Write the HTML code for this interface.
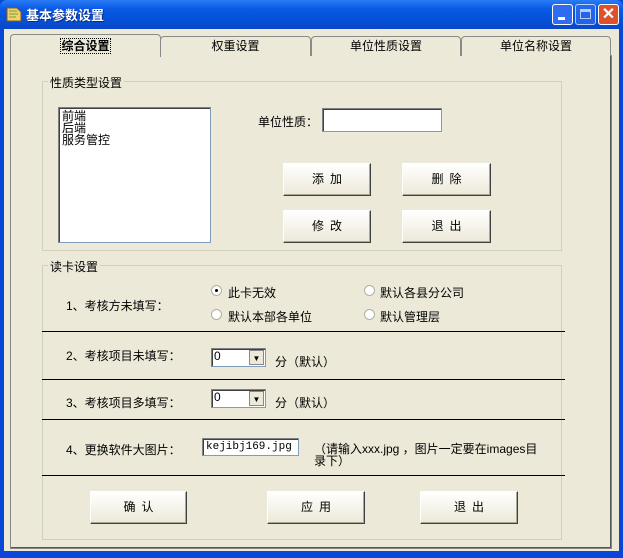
<!DOCTYPE html><html><head><meta charset="utf-8"><style>
*{margin:0;padding:0;box-sizing:border-box}
body{width:623px;height:558px;overflow:hidden;background:#0a46d8;font-family:"Liberation Sans","SimSun","Noto Sans CJK SC",sans-serif;font-size:12px;color:#000;position:relative}
.a{position:absolute}
#title{left:0;top:0;width:623px;height:29px;background:linear-gradient(#2a7cf5,#0a5ae6 30%,#0550d6 70%,#0a47c8);border-radius:7px 7px 0 0}
#client{left:4px;top:29px;width:615px;height:522px;background:#ece9d8}
.tab{background:#ece9d8;border:1px solid #8a8a8a;border-bottom:none;border-radius:4px 4px 0 0;text-align:center;line-height:18px}
.panel{border:1px solid #888;border-top:1px solid #919b9c;box-shadow:inset -1px -1px #555;background:#ece9d8}
.grp{border:1px solid #d0d0bf}
.lbl{background:#ece9d8;padding:0 2px}
.btn{background:linear-gradient(#fff,#ece9d8);border:1px solid #fff;border-right-color:#404040;border-bottom-color:#404040;box-shadow:inset -1px -1px #aca899;text-align:center;letter-spacing:6px;text-indent:6px}
.inp{background:#fff;border:1px solid #7f9db9;border-top-color:#808080;border-left-color:#808080;box-shadow:inset 1px 1px #404040}
.hr{height:1px;background:#000;left:42px;width:523px}
.rad{width:11px;height:11px;border-radius:50%;background:#fff;border:1px solid #b0b0a0}
</style></head><body>
<div class="a" id="title"></div>
<svg class="a" style="left:5px;top:5px" width="18" height="18"><path d="M2 3h10l4 4v9H2z" fill="#f0d070" stroke="#8a5a10"/><path d="M4 6h8M4 9h9M4 12h7" stroke="#6a3" /></svg>
<div class="a" style="left:26px;top:5px;color:#fff;font-weight:bold;font-size:13px;text-shadow:1px 1px #0a2a80">基本参数设置</div>
<div class="a" style="left:552px;top:4px;width:21px;height:21px;border:1px solid #fff;border-radius:3px;background:#2f6cf0"><div class="a" style="left:5px;top:12px;width:7px;height:3px;background:#fff"></div></div>
<div class="a" style="left:575px;top:4px;width:21px;height:21px;border:1px solid #fff;border-radius:3px;background:#2f6cf0;opacity:.7"><div class="a" style="left:4px;top:4px;width:11px;height:10px;border:1px solid #fff;border-top-width:3px"></div></div>
<div class="a" style="left:598px;top:4px;width:21px;height:21px;border:1px solid #fff;border-radius:3px;background:#e0502a;color:#fff;font-weight:bold;font-size:16px;line-height:19px;text-align:center">✕</div>
<div class="a" id="client"></div>
<div class="a panel" style="left:10px;top:55px;width:602px;height:494px"></div>
<div class="a tab" style="left:160px;top:36px;width:151px;height:20px">权重设置</div>
<div class="a tab" style="left:311px;top:36px;width:150px;height:20px">单位性质设置</div>
<div class="a tab" style="left:461px;top:36px;width:150px;height:20px">单位名称设置</div>
<div class="a tab" style="left:10px;top:34px;width:151px;height:23px;border-bottom:none;line-height:22px;font-weight:bold"><span style="border:1px dotted #000">综合设置</span></div>
<div class="a grp" style="left:42px;top:81px;width:520px;height:170px"></div>
<div class="a lbl" style="left:48px;top:74px">性质类型设置</div>
<div class="a inp" style="left:58px;top:107px;width:153px;height:136px;padding:2px 3px;line-height:12px">前端<br>后端<br>服务管控</div>
<div class="a" style="left:258px;top:113px">单位性质：</div>
<div class="a inp" style="left:322px;top:108px;width:120px;height:24px"></div>
<div class="a btn" style="left:283px;top:163px;width:88px;height:33px;line-height:31px">添加</div>
<div class="a btn" style="left:402px;top:163px;width:89px;height:33px;line-height:31px">删除</div>
<div class="a btn" style="left:283px;top:210px;width:88px;height:33px;line-height:31px">修改</div>
<div class="a btn" style="left:402px;top:210px;width:89px;height:33px;line-height:31px">退出</div>
<div class="a grp" style="left:42px;top:265px;width:520px;height:275px"></div>
<div class="a lbl" style="left:48px;top:258px">读卡设置</div>
<div class="a" style="left:66px;top:297px">1、考核方未填写：</div>
<div class="a rad" style="left:211px;top:285px"><div class="a" style="left:3px;top:3px;width:3px;height:3px;background:#000;border-radius:50%"></div></div><div class="a" style="left:228px;top:284px">此卡无效</div>
<div class="a rad" style="left:364px;top:285px"></div><div class="a" style="left:380px;top:284px">默认各县分公司</div>
<div class="a rad" style="left:211px;top:309px"></div><div class="a" style="left:228px;top:308px">默认本部各单位</div>
<div class="a rad" style="left:364px;top:309px"></div><div class="a" style="left:380px;top:308px">默认管理层</div>
<div class="a hr" style="top:331px"></div>
<div class="a" style="left:66px;top:347px">2、考核项目未填写：</div>
<div class="a inp" style="left:211px;top:348px;width:55px;height:19px;padding-left:2px;line-height:15px">0<div class="a" style="right:1px;top:1px;width:15px;height:15px;background:#ece9d8;border:1px solid #888;font-size:8px;text-align:center">▼</div></div>
<div class="a" style="left:275px;top:353px">分（默认）</div>
<div class="a hr" style="top:379px"></div>
<div class="a" style="left:66px;top:394px">3、考核项目多填写：</div>
<div class="a inp" style="left:211px;top:389px;width:55px;height:19px;padding-left:2px;line-height:15px">0<div class="a" style="right:1px;top:1px;width:15px;height:15px;background:#ece9d8;border:1px solid #888;font-size:8px;text-align:center">▼</div></div>
<div class="a" style="left:275px;top:394px">分（默认）</div>
<div class="a hr" style="top:419px"></div>
<div class="a" style="left:66px;top:441px">4、更换软件大图片：</div>
<div class="a inp" style="left:202px;top:438px;width:97px;height:18px;padding-left:3px;line-height:16px;font-family:'Liberation Mono',monospace;font-size:11px">kejibj169.jpg</div>
<div class="a" style="left:314px;top:443px;width:234px;line-height:12px">（请输入xxx.jpg ，图片一定要在images目录下）</div>
<div class="a hr" style="top:475px"></div>
<div class="a btn" style="left:90px;top:491px;width:97px;height:33px;line-height:31px">确认</div>
<div class="a btn" style="left:267px;top:491px;width:98px;height:33px;line-height:31px">应用</div>
<div class="a btn" style="left:420px;top:491px;width:98px;height:33px;line-height:31px">退出</div>
</body></html>
